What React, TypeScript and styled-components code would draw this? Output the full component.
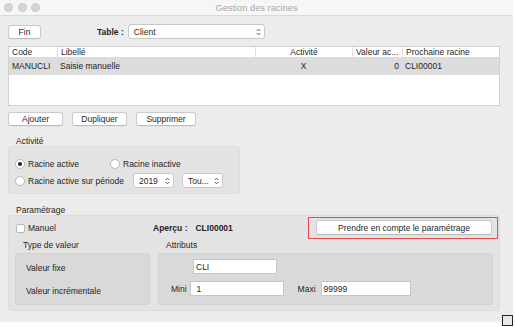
import React from 'react';
import styled, { createGlobalStyle } from 'styled-components';

const Global = createGlobalStyle`
  html, body { margin: 0; padding: 0; background: #ffffff; }
  body {
    font-family: "Liberation Sans", Arial, Helvetica, sans-serif;
    font-size: 8.5px;
    color: #1f1f1f;
  }
  #root { width: 515px; height: 327px; }
  * { box-sizing: border-box; }
`;

const Screen = styled.div`
  position: relative;
  width: 515px;
  height: 327px;
  background: #ffffff;
  overflow: hidden;
`;

const Window = styled.div`
  width: 513px;
  height: 322px;
  background: #ececec;
  display: flex;
  flex-direction: column;
`;

const TitleBar = styled.div`
  height: 16px;
  flex: none;
  background: #f6f6f6;
  border-bottom: 1px solid #dadada;
  display: grid;
  grid-template-columns: 1fr auto 1fr;
  align-items: center;
`;

const Lights = styled.div`
  display: flex;
  gap: 4.5px;
  padding-left: 4px;
`;

const Light = styled.span`
  width: 9px;
  height: 9px;
  border-radius: 50%;
  background: #d5d5d5;
  border: 0.5px solid #c9c9c9;
`;

const Title = styled.div`
  font-size: 9.3px;
  color: #a8a8a8;
`;

const Content = styled.div`
  padding: 8px 13px 0 8px;
  display: flex;
  flex-direction: column;
`;

const Toolbar = styled.div`
  display: flex;
  align-items: center;
  height: 15px;
`;

const Button = styled.button<{ $w: number }>`
  width: ${p => p.$w}px;
  height: 14px;
  padding: 0;
  background: #ffffff;
  border: 1px solid #cbcbcb;
  border-bottom-color: #bdbdbd;
  border-radius: 3px;
  font-family: inherit;
  font-size: 8.5px;
  color: #1f1f1f;
  line-height: 12px;
  text-align: center;
  box-shadow: 0 0.5px 0.5px rgba(0, 0, 0, 0.06);
`;

const BoldLabel = styled.span<{ $ml?: number }>`
  font-weight: bold;
  margin-left: ${p => p.$ml ?? 0}px;
  white-space: nowrap;
`;

const Select = styled.div<{ $w: number; $ml?: number }>`
  width: ${p => p.$w}px;
  height: 15px;
  margin-left: ${p => p.$ml ?? 0}px;
  background: #ffffff;
  border: 1px solid #c8c8c8;
  border-radius: 3px;
  display: flex;
  align-items: center;
  justify-content: space-between;
  padding: 0 3px 0 5px;
  white-space: nowrap;
`;

const Chevrons = () => (
  <svg width="5" height="8" viewBox="0 0 5 8" fill="none">
    <path d="M0.8 3 L2.5 1.2 L4.2 3" stroke="#4a4a4a" strokeWidth="0.9" />
    <path d="M0.8 5 L2.5 6.8 L4.2 5" stroke="#4a4a4a" strokeWidth="0.9" />
  </svg>
);

const TableBox = styled.div`
  margin-top: 7px;
  height: 60px;
  background: #ffffff;
  border: 1px solid #d2d2d2;
`;

const Row = styled.div<{ $head?: boolean }>`
  display: grid;
  grid-template-columns: 48px 198px 97px 50px 1fr;
  height: ${p => (p.$head ? 10 : 18)}px;
  line-height: ${p => (p.$head ? 10 : 18)}px;
  background: ${p => (p.$head ? '#ffffff' : '#dcdcdc')};
`;

const Cell = styled.div<{ $align?: string; $sep?: boolean }>`
  padding: 0 3px;
  text-align: ${p => p.$align ?? 'left'};
  white-space: nowrap;
  overflow: hidden;
  border-left: ${p => (p.$sep ? '1px solid #e0e0e0' : 'none')};
`;

const ButtonRow = styled.div`
  display: flex;
  gap: 9px;
  margin-top: 6px;
`;

const SectionLabel = styled.div<{ $mt: number }>`
  margin-top: ${p => p.$mt}px;
  padding-left: 8px;
  line-height: 10px;
  height: 10px;
`;

const GroupBox = styled.div<{ $w: number; $h: number }>`
  width: ${p => p.$w}px;
  height: ${p => p.$h}px;
  background: #e3e3e3;
  border: 1px solid #dcdcdc;
  border-radius: 3px;
`;

const ActivityBox = styled(GroupBox)`
  padding: 11px 0 0 6px;
  display: flex;
  flex-direction: column;
  gap: 3px;
`;

const RadioLine = styled.div<{ $h: number }>`
  display: flex;
  align-items: center;
  height: ${p => p.$h}px;
`;

const RadioOption = styled.label<{ $w?: number }>`
  display: flex;
  align-items: center;
  gap: 3px;
  width: ${p => (p.$w ? `${p.$w}px` : 'auto')};
  white-space: nowrap;
`;

const RadioCircle = styled.span<{ $on?: boolean }>`
  width: 10px;
  height: 10px;
  border-radius: 50%;
  background: #ffffff;
  border: 1px solid #b9b9b9;
  display: flex;
  align-items: center;
  justify-content: center;
  &::after {
    content: '';
    width: 3.5px;
    height: 3.5px;
    border-radius: 50%;
    background: ${p => (p.$on ? '#2b2b2b' : 'transparent')};
  }
`;

const ParamBox = styled(GroupBox)`
  padding: 1px 1px 5px 1px;
  display: flex;
  flex-direction: column;
`;

const ParamTop = styled.div`
  display: grid;
  grid-template-columns: 137px auto 1fr;
  align-items: center;
  height: 22px;
  padding-left: 6px;
`;

const CheckOption = styled.label`
  display: flex;
  align-items: center;
  gap: 3px;
`;

const Checkbox = styled.span`
  width: 9px;
  height: 9px;
  background: #ffffff;
  border: 1px solid #b9b9b9;
  border-radius: 2px;
`;

const Preview = styled.div`
  display: flex;
  gap: 8px;
  font-weight: bold;
`;

const Highlight = styled.div`
  justify-self: end;
  width: 190px;
  height: 22px;
  border: 1px solid #e24a50;
  padding: 2px 5px 0 7px;
`;

const WideButton = styled(Button)`
  width: 100%;
  height: 15px;
`;

const SubGrid = styled.div`
  display: grid;
  grid-template-columns: 135px 335px;
  gap: 8px;
  padding: 0 5px;
`;

const SubCol = styled.div`
  display: flex;
  flex-direction: column;
`;

const SubLabel = styled.div`
  margin: 1px 0 3px 8px;
  line-height: 10px;
  height: 10px;
`;

const SubBox = styled.div`
  height: 52px;
  background: #d9d9d9;
  border: 1px solid #d3d3d3;
  border-radius: 3px;
  display: flex;
  flex-direction: column;
`;

const TypeBox = styled(SubBox)`
  padding: 9px 0 0 10px;
  gap: 13px;
  line-height: 10px;
`;

const AttrBox = styled(SubBox)`
  padding: 5px 0 0 0;
  gap: 7px;
`;

const AttrLine = styled.div<{ $pl: number }>`
  display: flex;
  align-items: center;
  padding-left: ${p => p.$pl}px;
  height: 15px;
`;

const Field = styled.div<{ $w: number; $ml?: number; $pl?: number }>`
  width: ${p => p.$w}px;
  height: 15px;
  margin-left: ${p => p.$ml ?? 0}px;
  padding-left: ${p => p.$pl ?? 2}px;
  background: #ffffff;
  border: 1px solid #c6c6c6;
  line-height: 13px;
  padding-top: 1px;
`;

const FieldLabel = styled.span<{ $ml?: number }>`
  margin-left: ${p => p.$ml ?? 0}px;
`;

const ResizeGrip = styled.div`
  position: absolute;
  left: 502px;
  top: 315px;
  width: 11px;
  height: 11px;
  border: 1.5px solid #262626;
  background: #e9e9e9;
`;

export default function App() {
  return (
    <Screen>
      <Global />
      <Window>
        <TitleBar>
          <Lights>
            <Light />
            <Light />
            <Light />
          </Lights>
          <Title>Gestion des racines</Title>
          <div />
        </TitleBar>
        <Content>
          <Toolbar>
            <Button $w={33}>Fin</Button>
            <BoldLabel $ml={56}>Table :</BoldLabel>
            <Select $w={137} $ml={4}>
              <span>Client</span>
              <Chevrons />
            </Select>
          </Toolbar>

          <TableBox>
            <Row $head>
              <Cell>Code</Cell>
              <Cell $sep>Libellé</Cell>
              <Cell $sep $align="center">Activité</Cell>
              <Cell $sep>Valeur ac...</Cell>
              <Cell $sep>Prochaine racine</Cell>
            </Row>
            <Row>
              <Cell>MANUCLI</Cell>
              <Cell>Saisie manuelle</Cell>
              <Cell $align="center">X</Cell>
              <Cell $align="right">0</Cell>
              <Cell>CLI00001</Cell>
            </Row>
          </TableBox>

          <ButtonRow>
            <Button $w={55}>Ajouter</Button>
            <Button $w={55}>Dupliquer</Button>
            <Button $w={60}>Supprimer</Button>
          </ButtonRow>

          <SectionLabel $mt={10}>Activité</SectionLabel>
          <ActivityBox $w={232} $h={48}>
            <RadioLine $h={12}>
              <RadioOption $w={95}>
                <RadioCircle $on />
                Racine active
              </RadioOption>
              <RadioOption>
                <RadioCircle />
                Racine inactive
              </RadioOption>
            </RadioLine>
            <RadioLine $h={15}>
              <RadioOption>
                <RadioCircle />
                Racine active sur période
              </RadioOption>
              <Select $w={41} $ml={9}>
                <span>2019</span>
                <Chevrons />
              </Select>
              <Select $w={41} $ml={8}>
                <span>Tou...</span>
                <Chevrons />
              </Select>
            </RadioLine>
          </ActivityBox>

          <SectionLabel $mt={11}>Paramétrage</SectionLabel>
          <ParamBox $w={492} $h={96}>
            <ParamTop>
              <CheckOption>
                <Checkbox />
                Manuel
              </CheckOption>
              <Preview>
                <span>Aperçu :</span>
                <span>CLI00001</span>
              </Preview>
              <Highlight>
                <WideButton $w={177}>Prendre en compte le paramétrage</WideButton>
              </Highlight>
            </ParamTop>
            <SubGrid>
              <SubCol>
                <SubLabel>Type de valeur</SubLabel>
                <TypeBox>
                  <span>Valeur fixe</span>
                  <span>Valeur incrémentale</span>
                </TypeBox>
              </SubCol>
              <SubCol>
                <SubLabel>Attributs</SubLabel>
                <AttrBox>
                  <AttrLine $pl={34}>
                    <Field $w={84}>CLI</Field>
                  </AttrLine>
                  <AttrLine $pl={12}>
                    <FieldLabel>Mini</FieldLabel>
                    <Field $w={94} $ml={3} $pl={6}>1</Field>
                    <FieldLabel $ml={14}>Maxi</FieldLabel>
                    <Field $w={90} $ml={5}>99999</Field>
                  </AttrLine>
                </AttrBox>
              </SubCol>
            </SubGrid>
          </ParamBox>
        </Content>
      </Window>
      <ResizeGrip />
    </Screen>
  );
}
